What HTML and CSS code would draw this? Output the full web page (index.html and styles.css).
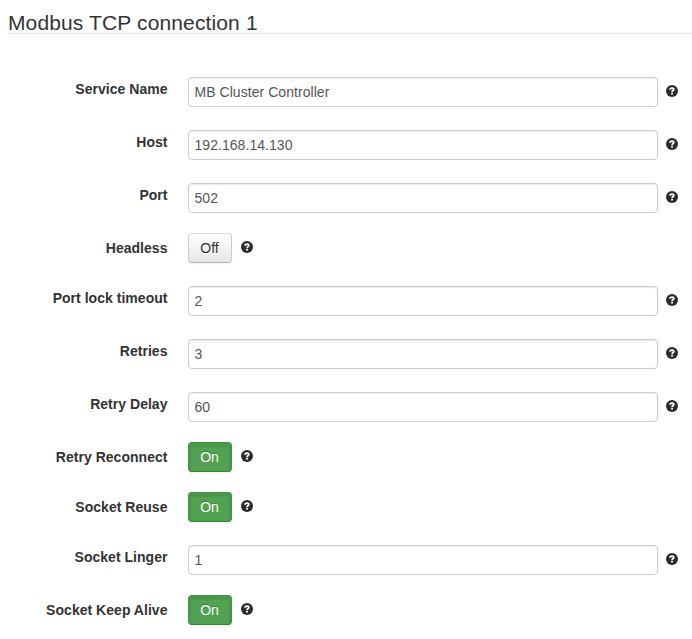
FILE: index.html
```html
<!DOCTYPE html>
<html lang="en">
<head>
<meta charset="utf-8">
<title>Modbus TCP connection 1</title>
<link rel="stylesheet" href="styles.css">
</head>
<body>
<svg width="0" height="0" class="defs"><symbol id="help" viewBox="0 0 12 12"><circle cx="6" cy="6" r="6" fill="#2b2b2b"/><path d="M4 4.700C4 3.500 4.900 3.100 6 3.100s1.800.5 1.800 1.400C7.800 5.500 6.100 5.600 6.100 6.900" fill="none" stroke="#fff" stroke-width="1.700"/><path d="M5.100 7.800h1.900v1.600H5.100z" fill="#fff"/></symbol></svg>
<form>
<h1 class="legend">Modbus TCP connection 1</h1>
<div class="row"><label>Service Name</label><input class="field" value="MB Cluster Controller"><svg class="help"><use href="#help"/></svg></div>
<div class="row"><label>Host</label><input class="field" value="192.168.14.130"><svg class="help"><use href="#help"/></svg></div>
<div class="row"><label>Port</label><input class="field" value="502"><svg class="help"><use href="#help"/></svg></div>
<div class="row toggle"><label>Headless</label><button type="button" class="btn">Off</button><svg class="help"><use href="#help"/></svg></div>
<div class="row"><label>Port lock timeout</label><input class="field" value="2"><svg class="help"><use href="#help"/></svg></div>
<div class="row"><label>Retries</label><input class="field" value="3"><svg class="help"><use href="#help"/></svg></div>
<div class="row"><label>Retry Delay</label><input class="field" value="60"><svg class="help"><use href="#help"/></svg></div>
<div class="row toggle"><label>Retry Reconnect</label><button type="button" class="btn on">On</button><svg class="help"><use href="#help"/></svg></div>
<div class="row toggle"><label>Socket Reuse</label><button type="button" class="btn on">On</button><svg class="help"><use href="#help"/></svg></div>
<div class="row"><label>Socket Linger</label><input class="field" value="1"><svg class="help"><use href="#help"/></svg></div>
<div class="row toggle"><label>Socket Keep Alive</label><button type="button" class="btn on">On</button><svg class="help"><use href="#help"/></svg></div>
</form>
</body>
</html>
```
FILE: styles.css
```css
* { box-sizing: border-box; }
body { margin: 0; background: #fff; color: #333; font: 14px/20px "Liberation Sans", Arial, sans-serif; overflow: hidden; }
.defs { display: block; height: 0; }
.legend { margin: 0 0 43px 8px; padding-top: 8px; height: 34px; border-bottom: 1px solid #e5e5e5; font-size: 21px; line-height: 29px; font-weight: 400; letter-spacing: .13px; }
.row { display: flex; align-items: flex-start; height: 53px; }
.row label { width: 167.5px; margin-right: 20.5px; padding-top: 2px; text-align: right; font-weight: 700; letter-spacing: .03px; }
.field { width: 470px; height: 30px; margin: 0; padding: 4px 5.5px; border: 1px solid #ccc; border-radius: 4px; background: #fff; color: #555; font: inherit; letter-spacing: .05px; box-shadow: inset 0 1px 1px rgba(0,0,0,.075); }
.help { width: 12px; height: 12px; margin: 8px 0 0 8px; flex: none; }
.toggle { margin-top: -3px; }
.toggle label { padding-top: 5px; }
.btn { width: 44px; height: 30px; margin: 0; padding: 4px 1px 4px 0; border: 1px solid; border-color: #d9d9d9 #ccc #b3b3b3; border-radius: 4px; background: linear-gradient(#fff, #e6e6e6); color: #333; font: inherit; text-shadow: 0 1px 1px rgba(255,255,255,.75); box-shadow: inset 0 1px 0 rgba(255,255,255,.2), 0 1px 2px rgba(0,0,0,.05); }
.btn.on { border-color: #469246 #469246 #398039; background: #51a351; color: #fff; text-shadow: 0 -1px 0 rgba(0,0,0,.25); box-shadow: inset 0 2px 1px 2px rgba(0,0,0,.08), 0 1px 2px rgba(0,0,0,.05); }
.toggle .help { margin-left: 9px; }
```
